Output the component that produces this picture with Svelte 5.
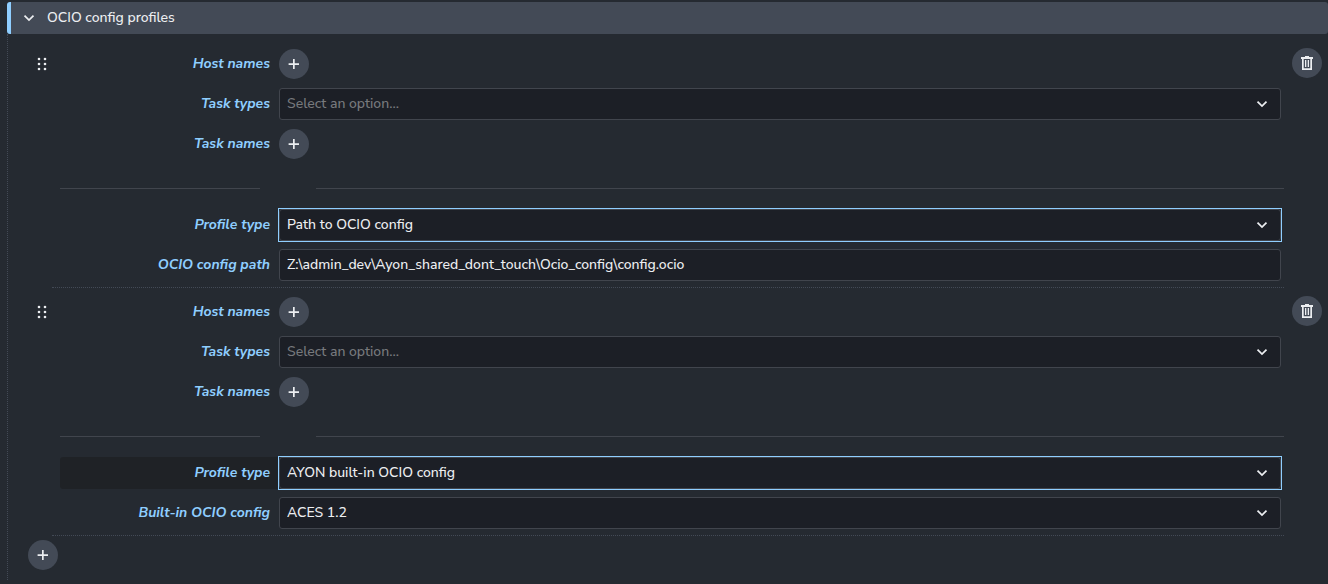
<script>
    const hosts = { kind: 'list', label: 'Host names' }
    const taskTypes = { kind: 'select', label: 'Task types', placeholder: 'Select an option...', options: ['Generic', 'Compositing'] }
    const taskNames = { kind: 'list', label: 'Task names' }
    const profileTypes = ['Path to OCIO config', 'AYON built-in OCIO config']

    let expanded = $state(true)
    let profiles = $state([
        {
            filters: [{ ...hosts }, { ...taskTypes, value: '' }, { ...taskNames }],
            fields: [
                { kind: 'select', label: 'Profile type', value: 'Path to OCIO config', options: profileTypes, changed: true },
                { kind: 'text', label: 'OCIO config path', value: 'Z:\\admin_dev\\Ayon_shared_dont_touch\\Ocio_config\\config.ocio' }
            ]
        },
        {
            filters: [{ ...hosts }, { ...taskTypes, value: '' }, { ...taskNames }],
            fields: [
                { kind: 'select', label: 'Profile type', value: 'AYON built-in OCIO config', options: profileTypes, changed: true, active: true },
                { kind: 'select', label: 'Built-in OCIO config', value: 'ACES 1.2', options: ['ACES 1.2', 'Nuke default'] }
            ]
        }
    ])

    function addProfile() {
        profiles.push({ filters: [{ ...hosts }, { ...taskTypes, value: '' }, { ...taskNames }], fields: [] })
    }

    function removeProfile(index) {
        profiles.splice(index, 1)
    }
</script>

{#snippet plus()}
    <svg class="icon" viewBox="0 0 20 20" aria-hidden="true"><path d="M9 5h1.7v4.2H15v1.7h-4.3V15H9v-4.1H4.6V9.2H9z" /></svg>
{/snippet}

{#snippet chevron()}
    <svg class="icon stroke" viewBox="0 0 20 20" aria-hidden="true"><path d="M5.5 7.6l4.5 4.5 4.5-4.5" /></svg>
{/snippet}

{#snippet row(field, id)}
    <div class="row" class:active={field.active}>
        <label for={id}>{field.label}</label>
        {#if field.kind === 'list'}
            <button class="round" {id} aria-label="Add {field.label}">{@render plus()}</button>
        {:else if field.kind === 'select'}
            <div class="select" class:changed={field.changed}>
                <select {id} class:empty={!field.value} bind:value={field.value}>
                    {#if field.placeholder}
                        <option value="">{field.placeholder}</option>
                    {/if}
                    {#each field.options as option}
                        <option value={option}>{option}</option>
                    {/each}
                </select>
                {@render chevron()}
            </div>
        {:else}
            <input type="text" {id} bind:value={field.value} />
        {/if}
    </div>
{/snippet}

<section class="panel">
    <button class="header" aria-expanded={expanded} onclick={() => (expanded = !expanded)}>
        {@render chevron()}
        <span>OCIO config profiles</span>
    </button>
    {#if expanded}
        <div class="body">
            {#each profiles as profile, index}
                <div class="profile">
                    <div class="handle">
                        <svg viewBox="0 0 10 14" aria-hidden="true">
                            {#each [2, 7, 12] as y}
                                <circle cx="2" cy={y} r="1.3" />
                                <circle cx="8" cy={y} r="1.3" />
                            {/each}
                        </svg>
                    </div>
                    <div class="form">
                        {#each profile.filters as field, i}
                            {@render row(field, `profile-${index}-filter-${i}`)}
                        {/each}
                        <div class="divider"><span></span><span></span></div>
                        {#each profile.fields as field, i}
                            {@render row(field, `profile-${index}-field-${i}`)}
                        {/each}
                    </div>
                    <button class="round remove" aria-label="Remove profile" onclick={() => removeProfile(index)}>
                        <svg class="icon" viewBox="0 0 20 20" aria-hidden="true">
                            <path fill-rule="evenodd" d="M8 3h4v1h4v2h-1v11H5V6H4V4h4zM6.7 6v9.3h6.6V6zM8 7h1.3v7H8zM10.7 7H12v7h-1.3z" />
                        </svg>
                    </button>
                </div>
            {/each}
            <button class="round add" aria-label="Add profile" onclick={addProfile}>{@render plus()}</button>
        </div>
    {/if}
</section>

<style>
    :global(body) {
        margin: 0;
        background-color: #252a31;
    }
    .panel {
        padding: 2px 0 4px 7px;
        color: #eceef1;
        font-family: "Nunito Sans", Nunito, "Open Sans", sans-serif;
        font-size: 14px;
        font-weight: 500;
        line-height: 20px;
    }
    button,
    input,
    select {
        box-sizing: border-box;
        margin: 0;
        color: inherit;
        font: inherit;
    }
    button {
        border: none;
        background-color: #434a56;
        cursor: pointer;
    }
    .icon {
        display: block;
        width: 20px;
        height: 20px;
        flex: none;
        fill: currentColor;
    }
    .icon.stroke {
        fill: none;
        stroke: currentColor;
        stroke-width: 1.7;
    }
    .header {
        display: flex;
        align-items: center;
        gap: 8px;
        width: 100%;
        height: 32px;
        padding: 0 8px;
        border-left: 4px solid #8fceff;
        border-radius: 3px;
        text-align: left;
    }
    .body {
        padding: 6px 6px 10px 20px;
        border-left: 1px dotted #434a56;
    }
    .profile {
        display: flex;
        align-items: flex-start;
        padding-top: 8px;
    }
    .handle {
        display: flex;
        align-items: center;
        justify-content: flex-end;
        width: 19px;
        height: 32px;
        margin-right: 5px;
        cursor: grab;
    }
    .handle svg {
        width: 10px;
        height: 14px;
        fill: currentColor;
    }
    .form {
        display: flex;
        flex: 1;
        flex-direction: column;
        gap: 8px;
        min-width: 0;
        padding: 0 0 6px 8px;
        border-bottom: 1px dotted #434a56;
    }
    .row {
        display: grid;
        grid-template-columns: 210px 1fr;
        align-items: center;
        gap: 9px;
        height: 32px;
        padding-right: 3px;
    }
    .row.active {
        border-radius: 3px;
        background: linear-gradient(#1f2226, #1f2226) no-repeat 0 0 / 219px 100%;
    }
    label {
        color: #8fceff;
        font-style: italic;
        font-weight: 700;
        text-align: right;
    }
    .round {
        display: flex;
        align-items: center;
        justify-content: center;
        width: 30px;
        height: 30px;
        padding: 0;
        border-radius: 50%;
    }
    .remove {
        margin-left: 8px;
    }
    .add {
        margin-top: 4px;
    }
    .select {
        display: grid;
        align-items: center;
    }
    .select select,
    .select .icon {
        grid-area: 1 / 1;
    }
    .select .icon {
        justify-self: end;
        margin-right: 9px;
        pointer-events: none;
    }
    select,
    input {
        width: 100%;
        height: 32px;
        padding: 0 7px;
        border: 1px solid #41454d;
        border-radius: 3px;
        background-color: #1c1f26;
        appearance: none;
    }
    input {
        padding-bottom: 2px;
    }
    select.empty {
        color: #77797d;
    }
    .changed {
        outline: 1px solid #8fceff;
    }
    .divider {
        display: grid;
        grid-template-columns: 200px 1fr;
        gap: 56px;
        padding: 20px 0 12px;
    }
    .divider span {
        height: 1px;
        background-color: #41454d;
    }
</style>
